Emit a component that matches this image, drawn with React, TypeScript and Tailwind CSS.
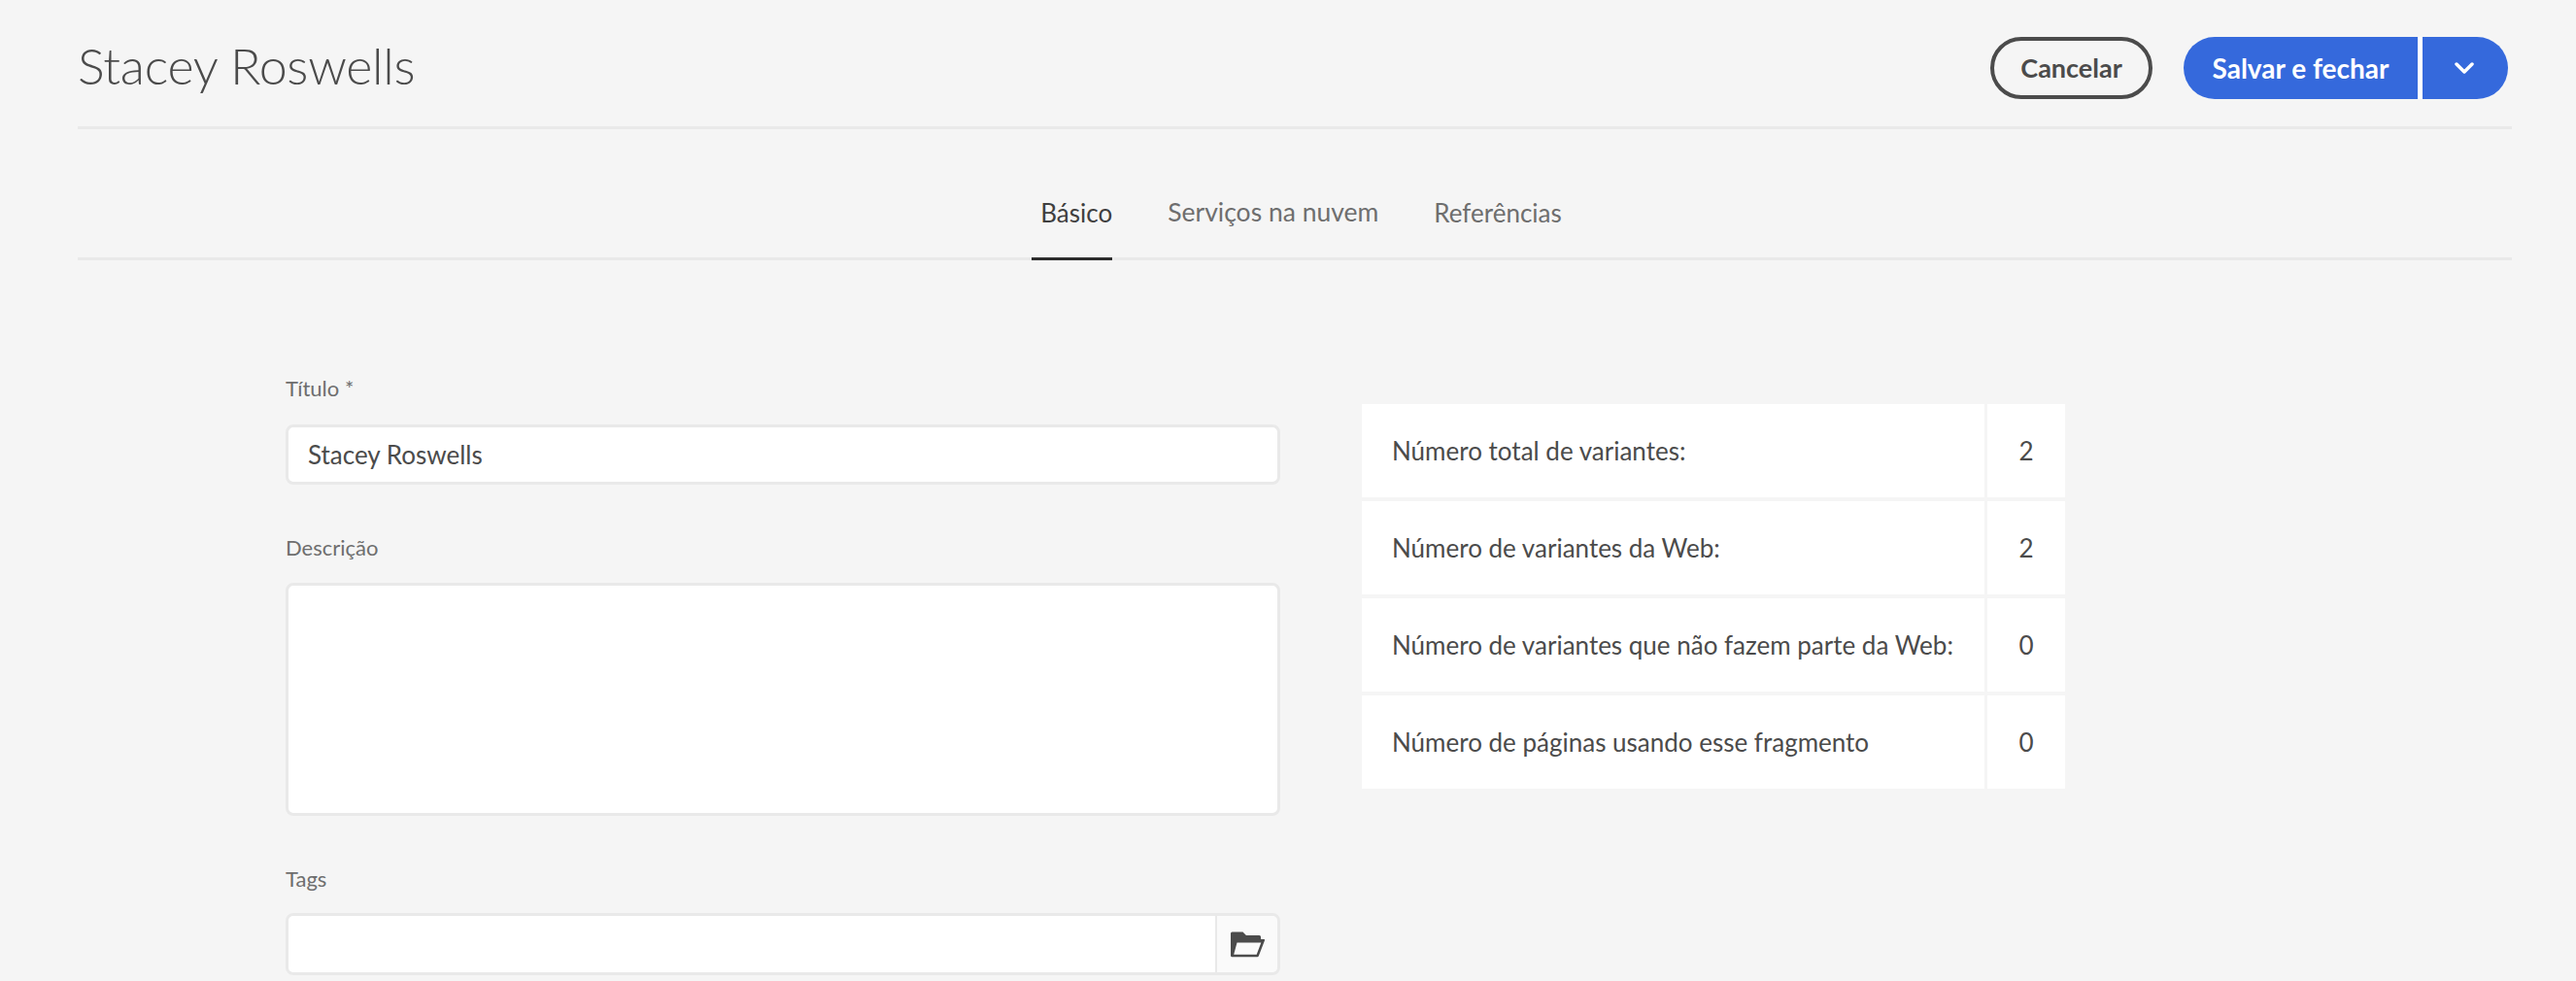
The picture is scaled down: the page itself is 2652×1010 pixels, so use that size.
const rows = [
  { label: "Número total de variantes:", value: 2 },
  { label: "Número de variantes da Web:", value: 2 },
  { label: "Número de variantes que não fazem parte da Web:", value: 0 },
  { label: "Número de páginas usando esse fragmento", value: 0 },
];

function FolderIcon() {
  return (
    <svg width="35" height="27" viewBox="0 0 35 27" className="text-[#4b4b4b]">
      <path
        fill="currentColor"
        fillRule="evenodd"
        d="M0 2a1.5 1.5 0 0 1 1.5-1.5h11L16 4h13.5A1.5 1.5 0 0 1 31 5.5V8h3a1 1 0 0 1 1 1.3l-6.2 16a1.5 1.5 0 0 1-1.4 1H1.5A1.5 1.5 0 0 1 0 25zM6.5 11.5 3.2 23.8h23.5l4.6-12.3z"
      />
    </svg>
  );
}

export default function App() {
  return (
    <div className="h-[1010px] overflow-hidden bg-[#f5f5f5] pr-[66px] pl-[80px] font-['Lato',sans-serif]">
      {/* title bar */}
      <div className="flex h-[133px] items-start justify-between border-b-[3px] border-[#e9e9e9] pt-[38px]">
        <h1 className="-mt-[3px] text-[52px] leading-[64px] font-light tracking-[-0.3px] text-[#4b4b4b]">Stacey Roswells</h1>
        <div className="mr-[4px] flex items-center gap-[32px]">
          <button className="h-[64px] w-[167px] rounded-full border-[4px] border-[#4b4b4b] text-[27px] font-bold text-[#4b4b4b]">
            Cancelar
          </button>
          <div className="flex h-[64px] gap-[5px] rounded-full bg-white">
            <button className="w-[241px] rounded-l-full bg-[#3569dc] text-[28px] font-bold text-white">
              Salvar e fechar
            </button>
            <button className="flex w-[88px] items-center justify-center rounded-r-full bg-[#3569dc] pr-[2px]">
              <svg width="22" height="14" viewBox="0 0 22 14" fill="none" stroke="white" strokeWidth="3.5" strokeLinecap="round" strokeLinejoin="round">
                <path d="M3 3l8 8 8-8" />
              </svg>
            </button>
          </div>
        </div>
      </div>

      {/* tabs */}
      <div className="flex h-[135px] justify-center gap-[57px] border-b-[3px] border-[#e9e9e9] pl-[4px] text-[26.5px]">
        <div className="-mb-[3px] flex items-center border-b-[3px] border-[#2c2c2c] pt-[40px] pl-[9px] text-[26px] text-[#3f3f3f]">Básico</div>
        <div className="flex items-center pt-[40px] text-[#6e6e6e]">Serviços na nuvem</div>
        <div className="flex items-center pt-[40px] text-[26px] text-[#6e6e6e]">Referências</div>
      </div>

      {/* form + stats */}
      <div className="flex items-start gap-[84px] pt-[118px] pl-[214px]">
        <div className="w-[1024px]">
          <label className="block text-[22px] leading-[28px] text-[#6e6e6e]">Título *</label>
          <input
            readOnly
            value="Stacey Roswells"
            className="mt-[23px] h-[62px] w-full rounded-[8px] border-[3px] border-[#e9e9e9] bg-white px-[20px] text-[26px] text-[#4b4b4b] outline-none"
          />
          <label className="mt-[51px] block text-[22px] leading-[28px] text-[#6e6e6e]">Descrição</label>
          <textarea
            readOnly
            className="mt-[22px] block h-[240px] w-full resize-none rounded-[8px] border-[3px] border-[#e9e9e9] bg-white outline-none"
          />
          <label className="mt-[51px] block text-[22px] leading-[28px] text-[#6e6e6e]">Tags</label>
          <div className="mt-[21px] flex h-[64px] overflow-hidden rounded-[8px] border-[3px] border-[#e9e9e9]">
            <div className="flex-1 bg-white" />
            <button className="flex w-[64px] items-center justify-center border-l-[2px] border-[#e9e9e9] bg-[#fafafa]">
              <FolderIcon />
            </button>
          </div>
        </div>

        <div className="mt-[30px] flex w-[724px] flex-col gap-[4px]">
          {rows.map((row) => (
            <div key={row.label} className="flex h-[96px] gap-[3px] text-[26px] text-[#4b4b4b]">
              <div className="flex w-[641px] items-center bg-white pl-[31px]">{row.label}</div>
              <div className="flex flex-1 items-center justify-center bg-white">{row.value}</div>
            </div>
          ))}
        </div>
      </div>
    </div>
  );
}
